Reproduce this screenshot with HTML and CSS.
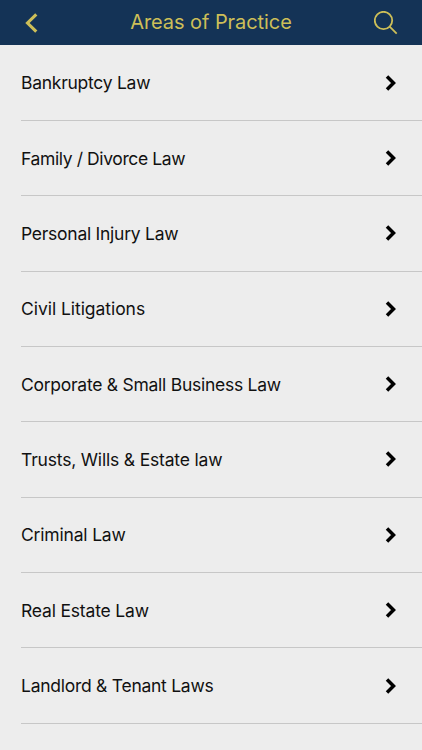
FILE: index.html
```html
<!DOCTYPE html>
<html lang="en">
<head>
<meta charset="utf-8">
<title>Areas of Practice</title>
<link rel="stylesheet" href="styles.css">
</head>
<body>
<header class="bar">
<button class="back" aria-label="Back"><svg width="14" height="20" viewBox="0 0 14 20"><path d="M12.300 1.300 3.500 10l8.800 8.700"/></svg></button>
<h1 class="title">Areas of Practice</h1>
<button class="search" aria-label="Search"><svg width="24" height="24" viewBox="0 0 24 24"><circle cx="9.500" cy="9.500" r="8.700"/><path d="m15.700 15.700 7 7"/></svg></button>
</header>
<ul class="list">
<li class="row"><span>Bankruptcy Law</span><svg class="chevron" width="12" height="16" viewBox="0 0 12 16"><path d="m2 1.500 6.500 6.500L2 14.500"/></svg></li>
<li class="row tight"><span>Family / Divorce Law</span><svg class="chevron" width="12" height="16" viewBox="0 0 12 16"><path d="m2 1.500 6.500 6.500L2 14.500"/></svg></li>
<li class="row"><span>Personal Injury Law</span><svg class="chevron" width="12" height="16" viewBox="0 0 12 16"><path d="m2 1.500 6.500 6.500L2 14.500"/></svg></li>
<li class="row loose"><span>Civil Litigations</span><svg class="chevron" width="12" height="16" viewBox="0 0 12 16"><path d="m2 1.500 6.500 6.500L2 14.500"/></svg></li>
<li class="row"><span>Corporate &amp; Small Business Law</span><svg class="chevron" width="12" height="16" viewBox="0 0 12 16"><path d="m2 1.500 6.500 6.500L2 14.500"/></svg></li>
<li class="row medium"><span>Trusts, Wills &amp; Estate law</span><svg class="chevron" width="12" height="16" viewBox="0 0 12 16"><path d="m2 1.500 6.500 6.500L2 14.500"/></svg></li>
<li class="row medium"><span>Criminal Law</span><svg class="chevron" width="12" height="16" viewBox="0 0 12 16"><path d="m2 1.500 6.500 6.500L2 14.500"/></svg></li>
<li class="row medium"><span>Real Estate Law</span><svg class="chevron" width="12" height="16" viewBox="0 0 12 16"><path d="m2 1.500 6.500 6.500L2 14.500"/></svg></li>
<li class="row"><span>Landlord &amp; Tenant Laws</span><svg class="chevron" width="12" height="16" viewBox="0 0 12 16"><path d="m2 1.500 6.500 6.500L2 14.500"/></svg></li>
</ul>
</body>
</html>
```
FILE: styles.css
```css
* { box-sizing: border-box; }
body { margin: 0; height: 750px; overflow: hidden; background: #ededed; color: #111; font-family: Inter, "Liberation Sans", sans-serif; }
.bar { display: grid; grid-template-columns: 64px 1fr 64px; align-items: center; height: 45px; background: #143356; color: #cdbf58; }
.title { margin: 0; padding-bottom: 2px; text-align: center; font-size: 20px; font-weight: 400; line-height: 42px; letter-spacing: -0.06px; }
button { display: flex; padding: 0; border: 0; background: none; color: inherit; }
.back { padding-left: 24px; }
.search { padding-left: 16px; }
svg { display: block; fill: none; stroke: currentColor; }
.back svg { stroke-width: 3.1; }
.search svg { stroke-width: 1.8; }
.list { margin: 0; padding: 0.6px 0 0 21px; list-style: none; }
.row { display: flex; align-items: center; justify-content: space-between; height: 75.35px; padding-right: 25px; border-bottom: 1px solid #c7c7c7; font-size: 17.5px; letter-spacing: -0.26px; }
.medium { letter-spacing: -0.18px; }
.tight { letter-spacing: -0.39px; }
.loose { letter-spacing: -0.05px; }
.chevron { color: #000; stroke-width: 3.5; }
```
